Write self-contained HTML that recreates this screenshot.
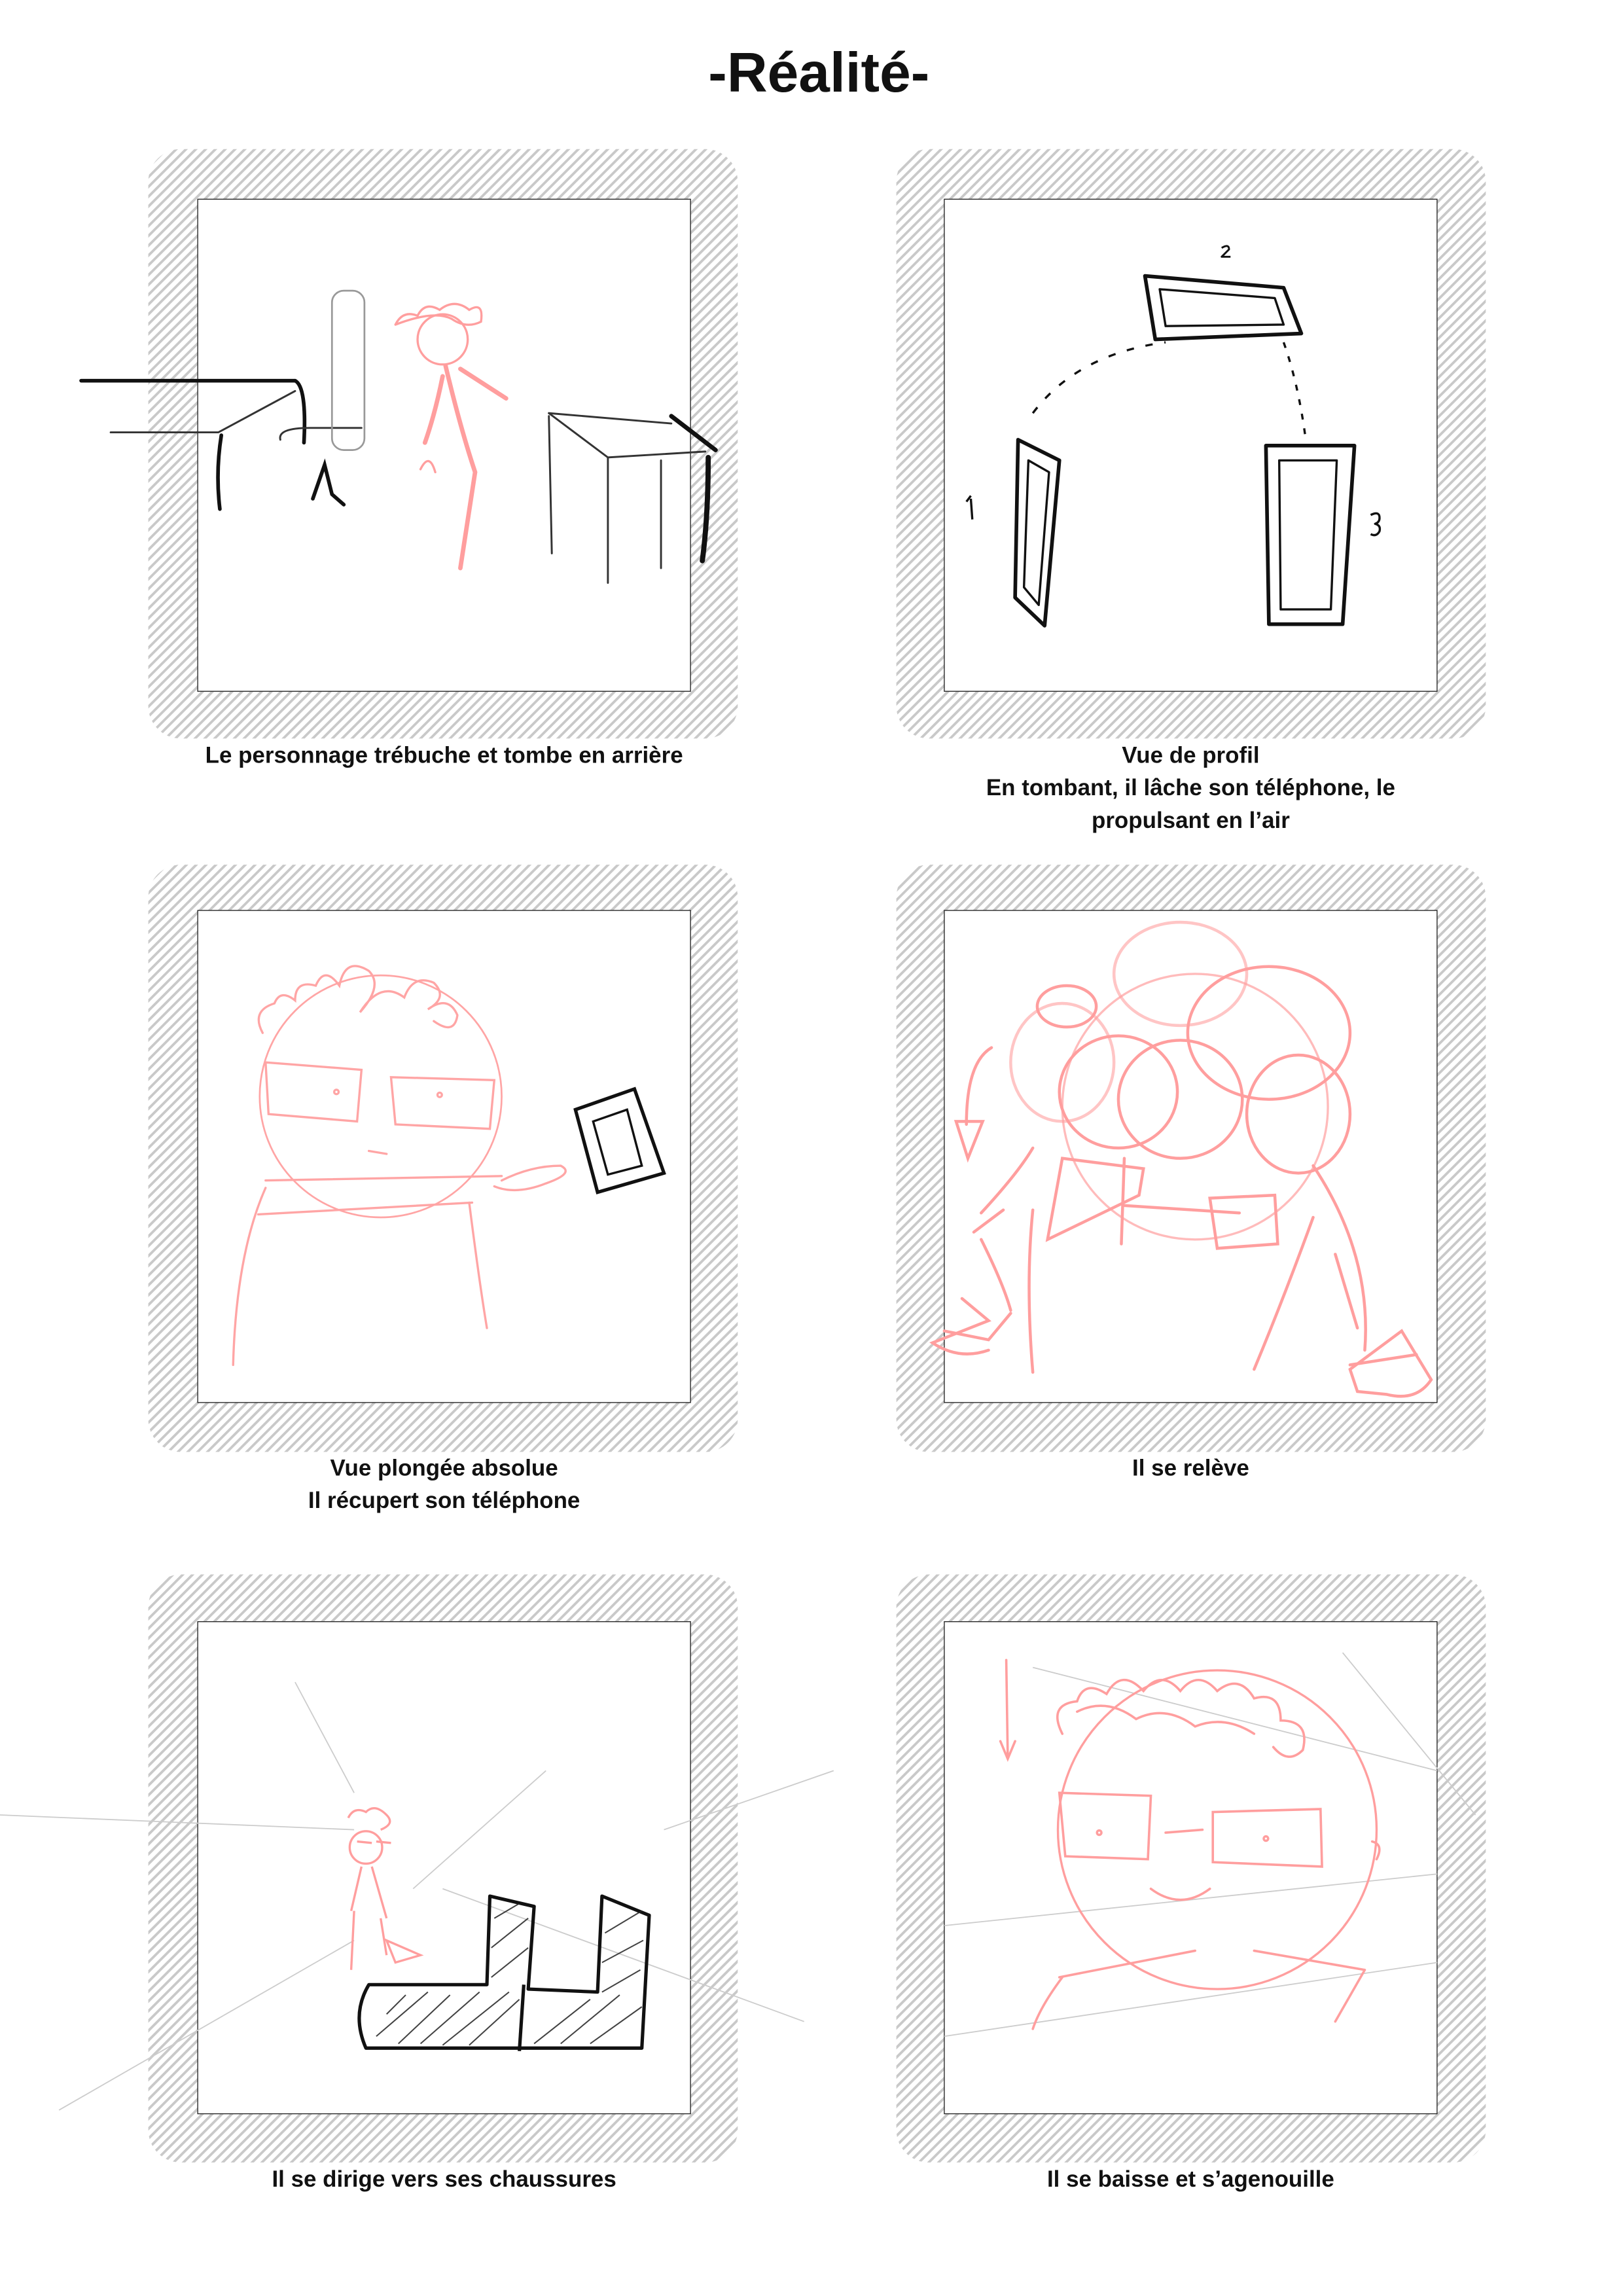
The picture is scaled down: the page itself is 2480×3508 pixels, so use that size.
<!DOCTYPE html>
<html><head><meta charset="utf-8"><style>
html,body{margin:0;padding:0;background:#fff}
svg{display:block}
text{font-family:"Liberation Sans",sans-serif;font-weight:bold;fill:#111}
</style></head><body>
<svg width="2480" height="3508" viewBox="0 0 1100 1556" xmlns="http://www.w3.org/2000/svg">
<defs>
<pattern id="h" width="4.7" height="10" patternUnits="userSpaceOnUse" patternTransform="rotate(45)">
<rect width="4.7" height="10" fill="#fff"/><rect x="0" width="1.7" height="10" fill="#c9c9c9"/>
</pattern>
</defs>
<rect width="1100" height="1556" fill="#fff"/>
<text x="555" y="62" font-size="38" text-anchor="middle">-Réalité-</text>

<!-- frames -->
<g>
<rect x="100.5" y="101" width="399.5" height="399.5" rx="22" fill="url(#h)"/>
<rect x="607.5" y="101" width="399.5" height="399.5" rx="22" fill="url(#h)"/>
<rect x="100.5" y="586" width="399.5" height="398" rx="22" fill="url(#h)"/>
<rect x="607.5" y="586" width="399.5" height="398" rx="22" fill="url(#h)"/>
<rect x="100.5" y="1067" width="399.5" height="398.5" rx="22" fill="url(#h)"/>
<rect x="607.5" y="1067" width="399.5" height="398.5" rx="22" fill="url(#h)"/>
<g fill="#fff" stroke="#222" stroke-width="0.6">
<rect x="134" y="135" width="334" height="333.5"/>
<rect x="640" y="135" width="334" height="333.5"/>
<rect x="134" y="617" width="334" height="333.5"/>
<rect x="640" y="617" width="334" height="333.5"/>
<rect x="134" y="1099" width="334" height="333.5"/>
<rect x="640" y="1099" width="334" height="333.5"/>
</g>
</g>

<!-- captions -->
<g font-size="15.5" text-anchor="middle">
<text x="301" y="517">Le personnage trébuche et tombe en arrière</text>
<text x="807" y="517">Vue de profil</text>
<text x="807" y="539">En tombant, il lâche son téléphone, le</text>
<text x="807" y="561">propulsant en l’air</text>
<text x="301" y="1000">Vue plongée absolue</text>
<text x="301" y="1022">Il récupert son téléphone</text>
<text x="807" y="1000">Il se relève</text>
<text x="301" y="1482">Il se dirige vers ses chaussures</text>
<text x="807" y="1482">Il se baisse et s’agenouille</text>
</g>

<!-- panel 1 -->
<g fill="none" stroke-linecap="round">
<g stroke="#111" stroke-width="2.5">
<path d="M55 258 L200 258"/><path d="M200 258 Q208 262 206 300"/>
<path d="M150 295 Q146 320 149 345"/>
<path d="M212 338 L220 315 L225 335 L233 342"/>
<path d="M480 310 Q480 350 476 380" stroke-width="3.5"/>
<path d="M455 282 L485 305" stroke-width="3"/>
</g>
<g stroke="#333" stroke-width="1.3">
<path d="M75 293 L148 293 L200 265"/>
<path d="M372 280 L455 287"/><path d="M372 280 L412 310 L478 306"/>
<path d="M372 282 L374 375"/><path d="M412 310 L412 395"/><path d="M448 312 L448 385"/>
<path d="M190 298 Q188 290 210 290 L245 290"/>
</g>
<rect x="225" y="197" width="22" height="108" rx="8" stroke="#999" stroke-width="1.2"/>
<g stroke="#ff9e9e" stroke-width="1.5">
<circle cx="300" cy="230" r="17"/>
<path d="M268 220 q5 -10 15 -6 q5 -10 15 -4 q10 -8 20 0 q10 -6 8 8 q-10 5 -20 -2 q-12 -6 -38 4"/>
<path d="M302 248 Q312 290 322 320 L312 385 M312 250 L343 270 M300 255 Q295 280 288 300" stroke-width="3"/>
<path d="M285 318 q6 -12 10 2" />
</g>
</g>

<!-- panel 2 -->
<g fill="none" stroke="#111" stroke-width="2.5" stroke-linejoin="round">
<path d="M690 298 L718 312 L708 424 L688 405 Z"/>
<path d="M697 312 L711 320 L704 410 L694 398 Z" stroke-width="1.5"/>
<path d="M776 187 L870 195 L882 226 L783 230 Z"/>
<path d="M786 196 L864 202 L870 220 L790 221 Z" stroke-width="1.5"/>
<path d="M858 302 L918 302 L910 423 L860 423 Z"/>
<path d="M867 312 L906 312 L902 413 L868 413 Z" stroke-width="1.5"/>
<path d="M700 280 Q730 240 790 232" stroke-dasharray="5 8" stroke-width="1.5"/>
<path d="M870 232 Q880 260 885 298" stroke-dasharray="4 6" stroke-width="1.5"/>
<path d="M658 338 L659 352 M655 340 L658 336" stroke-width="1.5"/>
<path d="M828 168 q5 -3 5 1 l-5 5 l6 0" stroke-width="1.3"/>
<path d="M929 349 q6 -3 6 2 q0 3 -3 4 q4 1 3 5 q-2 4 -6 2" stroke-width="1.5"/>
</g>

<!-- panel 3 -->
<g fill="none" stroke="#ffa5a5" stroke-width="1.5" stroke-linecap="round">
<circle cx="258" cy="743" r="82" stroke-width="1.2"/>
<path d="M178 700 q-8 -15 8 -20 q4 -10 14 -2 q0 -14 14 -10 q6 -14 16 0 q4 -20 20 -10 q10 10 -6 28 q14 -22 30 -10 q6 -16 20 -10 q10 10 -4 18 q14 -10 20 4 q-2 14 -16 4"/>
<path d="M180 720 L245 725 L242 760 L182 755 Z"/>
<path d="M265 730 L335 732 L332 765 L268 762 Z"/>
<circle cx="228" cy="740" r="1.5"/><circle cx="298" cy="742" r="1.5"/>
<path d="M250 780 l12 2"/>
<path d="M180 800 L340 797 M175 823 L320 815 M180 805 Q160 850 158 925 M318 815 Q325 870 330 900 M340 800 Q360 790 380 790 q10 5 -10 12 q-20 8 -35 2"/>
</g>
<g fill="none" stroke="#111" stroke-width="2.3">
<path d="M390 752 L430 738 L450 795 L405 808 Z"/>
<path d="M402 760 L425 752 L435 790 L412 796 Z" stroke-width="1.5"/>
</g>

<!-- panel 4 -->
<g fill="none" stroke="#ff9e9e" stroke-width="2" stroke-linecap="round">
<circle cx="810" cy="750" r="90" stroke-width="1.5" opacity="0.7"/>
<ellipse cx="723" cy="682" rx="20" ry="14"/>
<ellipse cx="860" cy="700" rx="55" ry="45"/>
<ellipse cx="800" cy="660" rx="45" ry="35" opacity="0.6"/>
<ellipse cx="758" cy="740" rx="40" ry="38"/>
<ellipse cx="800" cy="745" rx="42" ry="40"/>
<ellipse cx="880" cy="755" rx="35" ry="40"/>
<ellipse cx="720" cy="720" rx="35" ry="40" opacity="0.6"/>
<path d="M720 785 L775 792 L772 810 L710 840 Z M762 785 L760 843 M762 817 L840 822"/>
<path d="M820 812 L864 810 L866 843 L825 846 Z"/>
<path d="M665 822 Q690 795 700 778 M660 835 L680 820 M665 840 Q680 870 685 888 M700 820 Q695 870 700 930 M655 762 Q655 720 672 710 M648 760 l18 0 l-10 25 Z"/>
<path d="M640 902 L670 908 L685 890 M652 880 L670 895 L632 910 Q650 922 670 915"/>
<path d="M890 790 Q930 850 925 915 M905 850 L920 900 M890 825 Q870 880 850 928 M915 928 L950 902 L970 935 Q960 950 940 945 L920 943 Z M915 925 L960 918"/>
</g>

<!-- panel 5 -->
<g fill="none" stroke="#ccc" stroke-width="0.8">
<path d="M0 1230 L240 1240"/><path d="M40 1430 L240 1315"/>
<path d="M200 1140 L240 1215"/><path d="M280 1280 L370 1200"/>
<path d="M450 1240 L565 1200"/><path d="M300 1280 L545 1370"/>
</g>
<g fill="none" stroke="#ff9e9e" stroke-width="1.5">
<circle cx="248" cy="1252" r="11"/>
<path d="M236 1232 q4 -8 12 -4 q6 -6 14 2 q6 6 -4 10"/>
<path d="M242 1248 l10 1 M255 1248 l10 1"/>
<path d="M245 1265 L238 1295 M252 1265 L262 1300 M240 1295 L238 1335 M258 1300 L262 1325 M262 1315 L285 1325 L268 1330 Z"/>
</g>
<g fill="none" stroke="#111" stroke-width="2.3" stroke-linejoin="round">
<path d="M250 1345 L330 1345 L332 1285 L362 1292 L358 1348 L405 1350 L408 1285 L440 1298 L435 1388 L248 1388 Q238 1365 250 1345 Z"/>
<path d="M355 1345 L352 1390"/>
</g>
<g stroke="#222" stroke-width="0.9" opacity="0.85">
<path d="M255 1380 L290 1350 M270 1385 L305 1352 M285 1385 L325 1350 M300 1386 L345 1350 M318 1386 L352 1355 M335 1300 L352 1290 M333 1320 L358 1300 M333 1340 L358 1320 M362 1385 L400 1355 M380 1385 L420 1352 M400 1385 L435 1360 M410 1310 L435 1295 M408 1330 L436 1315 M408 1350 L434 1335 M262 1365 L275 1352"/>
</g>

<!-- panel 6 -->
<g fill="none" stroke="#ccc" stroke-width="0.8">
<path d="M640 1305 L974 1270"/><path d="M700 1130 L974 1200"/><path d="M910 1120 L1000 1230"/>
<path d="M640 1380 L974 1330"/>
</g>
<g fill="none" stroke="#ff9e9e" stroke-width="1.6" stroke-linecap="round">
<circle cx="825" cy="1240" r="108" stroke-width="1.5"/>
<path d="M682 1125 L683 1190 M678 1180 l5 12 l5 -12"/>
<path d="M720 1175 q-10 -20 10 -22 q5 -15 20 -5 q10 -18 25 -2 q12 -15 25 0 q12 -15 25 0 q15 -12 25 5 q18 -5 18 15 q20 0 15 20 q-10 10 -20 -2"/>
<path d="M730 1160 q20 -10 40 5 q20 -10 40 5 q20 -8 40 5"/>
<path d="M718 1215 L780 1217 L778 1260 L722 1258 Z"/>
<path d="M822 1228 L895 1226 L896 1265 L822 1262 Z"/>
<path d="M790 1242 L815 1240"/>
<circle cx="745" cy="1242" r="1.5"/><circle cx="858" cy="1246" r="1.5"/>
<path d="M780 1280 q20 15 40 0"/>
<path d="M930 1248 q8 2 3 12"/>
<path d="M718 1340 L810 1322 M850 1322 L925 1335 M720 1340 Q705 1360 700 1375 M925 1335 L905 1370"/>
</g>
</svg>
</body></html>
